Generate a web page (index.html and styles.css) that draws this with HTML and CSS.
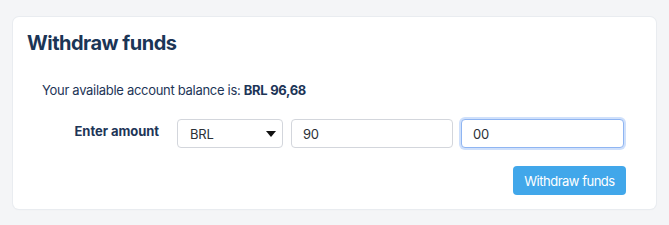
FILE: index.html
```html
<!DOCTYPE html>
<html>
<head>
<meta charset="utf-8">
<link rel="stylesheet" href="styles.css">
</head>
<body>
<div class="card">
  <h2 class="title">Withdraw funds</h2>
  <p class="balance">Your available account balance is: <strong>BRL 96,68</strong></p>
  <div class="row">
    <label class="label">Enter amount</label>
    <div class="select"><span>BRL</span><span class="caret"></span></div>
    <input class="input int" type="text" value="90">
    <input class="input dec focus" type="text" value="00">
  </div>
  <div class="actions">
    <button class="btn">Withdraw funds</button>
  </div>
</div>
</body>
</html>
```
FILE: styles.css
```css
html, body { margin: 0; padding: 0; }
body {
  background: #f4f5f7;
  font-family: Inter, "Noto Sans", sans-serif;
  color: #1d3557;
  width: 669px;
  height: 225px;
  overflow: hidden;
}
.card {
  margin: 17px 13px 0 13px;
  background: #fff;
  border-radius: 6px;
  box-shadow: 0 0 0 1px #e9ecf0, 0 1px 2px rgba(0,0,0,0.03);
  padding: 14px;
  box-sizing: border-box;
  height: 192px;
}
.title {
  margin: 0;
  font-size: 20px;
  line-height: 24px;
  font-weight: 700;
  color: #1b3556;
  letter-spacing: -0.5px;
}
.balance {
  margin: 26px 0 0 15px;
  font-size: 13px;
  line-height: 18px;
  color: #1d3557;
  letter-spacing: -0.3px;
}
.balance strong { font-weight: 700; }
.row {
  margin-top: 20px;
  display: flex;
  align-items: flex-start;
}
.label {
  width: 132px;
  text-align: right;
  font-size: 13px;
  font-weight: 700;
  line-height: 18px;
  padding-top: 3px;
  color: #1d3557;
  margin-right: 18px;
  letter-spacing: -0.05px;
}
.select {
  width: 106px;
  height: 29px;
  box-sizing: border-box;
  border: 1px solid #d3d6dc;
  border-radius: 4px;
  display: flex;
  align-items: center;
  justify-content: space-between;
  padding: 0 6px 0 12px;
  font-size: 13px;
  color: #2b2f36;
  margin-right: 8px;
  letter-spacing: -0.2px;
}
.caret {
  width: 0; height: 0;
  border-left: 5px solid transparent;
  border-right: 5px solid transparent;
  border-top: 6px solid #111;
}
.input {
  height: 29px;
  box-sizing: border-box;
  border: 1px solid #d3d6dc;
  border-radius: 4px;
  padding: 0 11px;
  font-family: Inter, "Noto Sans", sans-serif;
  font-size: 13px;
  color: #2b2f36;
  outline: none;
  margin: 0;
  letter-spacing: -0.2px;
}
.int { width: 162px; margin-right: 8px; }
.dec { width: 163px; }
.focus {
  border-color: #8fb5f2;
  box-shadow: 0 0 0 2px #cfe0fb;
}
.actions {
  display: flex;
  justify-content: flex-end;
  margin-top: 18px;
  padding-right: 16px;
}
.btn {
  width: 113px;
  height: 29px;
  border: none;
  border-radius: 4px;
  background: #41a7ea;
  color: #fff;
  font-family: Inter, "Noto Sans", sans-serif;
  font-size: 13px;
  letter-spacing: -0.5px;
  padding: 0;
}
```
